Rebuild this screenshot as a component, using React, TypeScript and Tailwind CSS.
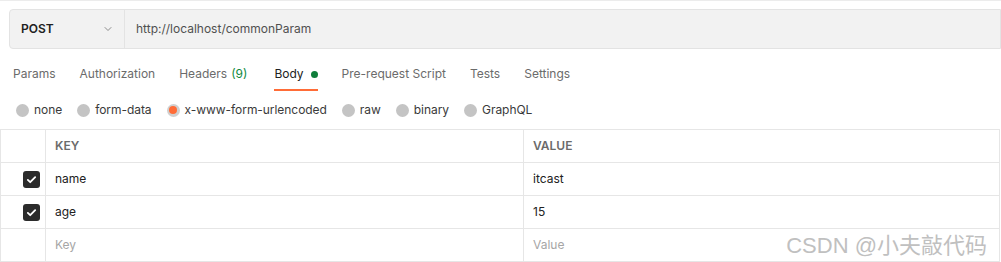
import { ChevronDown } from 'lucide-react';

const tabs = [
  { label: 'Params' },
  { label: 'Authorization' },
  { label: 'Headers', count: '(9)' },
  { label: 'Body', active: true },
  { label: 'Pre-request Script' },
  { label: 'Tests' },
  { label: 'Settings' },
];

const bodyTypes = ['none', 'form-data', 'x-www-form-urlencoded', 'raw', 'binary', 'GraphQL'];

const rows = [
  { key: 'name', value: 'itcast', checked: true },
  { key: 'age', value: '15', checked: true },
];

function Checkbox() {
  return (
    <div className="w-[17px] h-[17px] rounded-[3px] bg-[#2b2b2b] flex items-center justify-center">
      <svg width="11" height="11" viewBox="0 0 12 12" fill="none">
        <path d="M2 6.4l2.6 2.5L10 3.4" stroke="white" strokeWidth="2" strokeLinecap="round" strokeLinejoin="round" />
      </svg>
    </div>
  );
}

export default function App() {
  return (
    <div className="relative w-[1001px] h-[262px] bg-white border-t border-[#ececec] overflow-hidden font-['Inter',sans-serif] text-[12px]">
      {/* url bar */}
      <div className="ml-[9px] mt-[8px] h-[40px] flex bg-[#f2f2f2] border border-[#e3e3e3] rounded-l-[4px]">
        <div className="w-[115px] flex items-center justify-between pl-[11px] pr-[10px] border-r border-[#e3e3e3]">
          <span className="font-semibold text-[#212121] text-[12px]">POST</span>
          <ChevronDown size={12} strokeWidth={1.5} className="text-[#6b6b6b]" />
        </div>
        <div className="flex items-center pl-[11px] text-[#505050]">http://localhost/commonParam</div>
      </div>

      {/* tabs */}
      <div className="flex gap-[24px] pl-[13px] h-[42px] items-end">
        {tabs.map((t) => (
          <div
            key={t.label}
            className={
              'pb-[6px] border-b-2 flex items-center ' +
              (t.count ? 'gap-[4px] mr-[3px] ' : 'gap-[7px] ') +
              (t.active ? 'border-[#ff6c37] text-[#212121]' : 'border-transparent text-[#6b6b6b]')
            }
          >
            <span>{t.label}</span>
            {t.count && <span className="text-[#0f8a3e]">{t.count}</span>}
            {t.active && <span className="w-[7px] h-[7px] rounded-full bg-[#0f7d3a]" />}
          </div>
        ))}
      </div>

      {/* body types */}
      <div className="flex items-center gap-[15px] pl-[16px] h-[38px]">
        {bodyTypes.map((b) => {
          const sel = b === 'x-www-form-urlencoded';
          return (
            <div key={b} className="flex items-center gap-[5px] text-[#3a3a3a] tracking-[-0.05px]">
              <span
                className={
                  'w-[13px] h-[13px] rounded-full flex items-center justify-center ' +
                  (sel ? 'bg-[#d0d0d0]' : 'bg-[#c4c4c4]')
                }
              >
                {sel && <span className="w-[8px] h-[8px] rounded-full bg-[#ff6c37]" />}
              </span>
              <span>{b}</span>
            </div>
          );
        })}
      </div>

      {/* table */}
      <div className="w-[1000px] border-t border-l border-r border-[#e6e6e6] text-[#212121]">
        <div className="flex h-[33px] border-b border-[#e6e6e6]">
          <div className="w-[45px] border-r border-[#e6e6e6]" />
          <div className="w-[478px] border-r border-[#e6e6e6] flex items-center pl-[9px] font-semibold text-[#6b6b6b]">KEY</div>
          <div className="flex-1 flex items-center pl-[9px] font-semibold text-[#6b6b6b]">VALUE</div>
        </div>
        {rows.map((r) => (
          <div key={r.key} className="flex h-[33px] border-b border-[#e6e6e6]">
            <div className="w-[45px] border-r border-[#e6e6e6] flex items-center justify-end pr-[5px]">
              {r.checked && <Checkbox />}
            </div>
            <div className="w-[478px] border-r border-[#e6e6e6] flex items-center pl-[9px]">{r.key}</div>
            <div className="flex-1 flex items-center pl-[9px]">{r.value}</div>
          </div>
        ))}
        <div className="flex h-[33px] border-b border-[#e6e6e6] text-[#a6a6a6]">
          <div className="w-[45px] border-r border-[#e6e6e6]" />
          <div className="w-[478px] border-r border-[#e6e6e6] flex items-center pl-[9px]">Key</div>
          <div className="flex-1 flex items-center pl-[9px]">Value</div>
        </div>
      </div>

      {/* watermark */}
      <div className="absolute right-[14px] bottom-[5px] text-[22px] leading-none text-[#c0c0c0] font-['Liberation_Sans','Noto_Sans_CJK_SC',sans-serif]">
        CSDN @小夫敲代码
      </div>
    </div>
  );
}
